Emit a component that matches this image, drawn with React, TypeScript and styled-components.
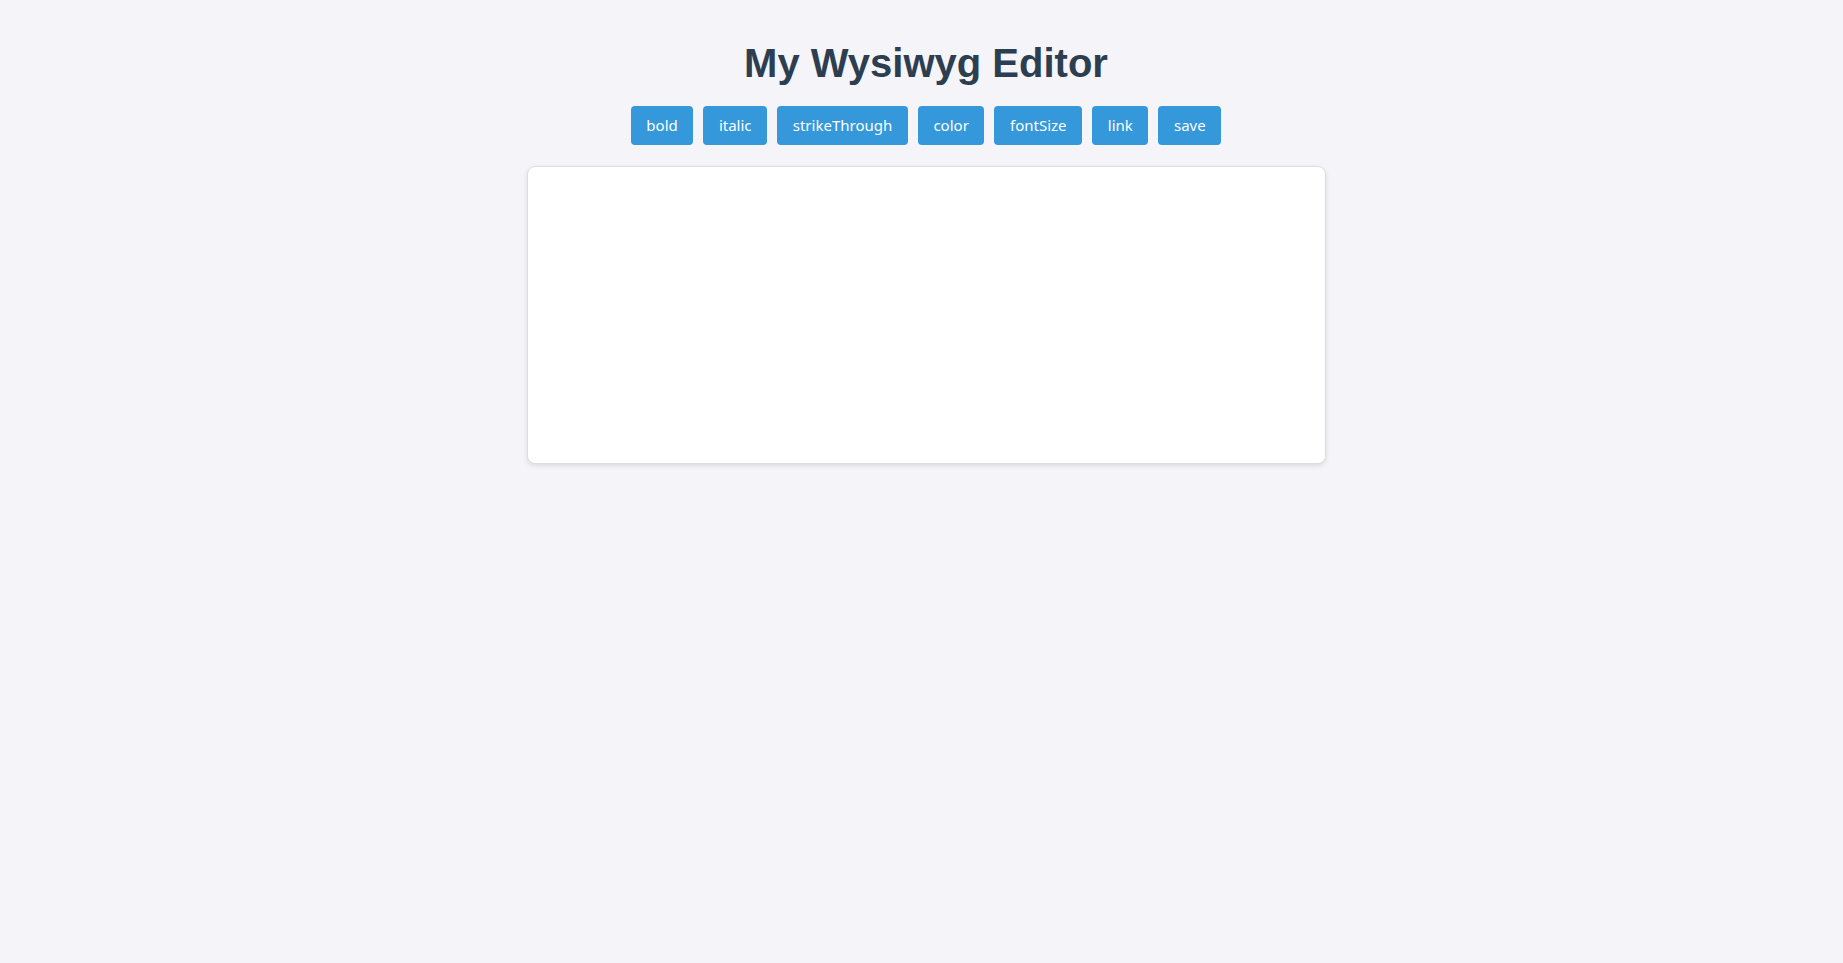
import React from "react";
import styled, { createGlobalStyle } from "styled-components";

const GlobalStyle = createGlobalStyle`
  html, body {
    margin: 0;
    padding: 0;
    background: #f4f4f9;
  }
  body {
    font-family: "Liberation Sans", Arial, sans-serif;
  }
`;

const Page = styled.div`
  display: flex;
  flex-direction: column;
  align-items: center;
  min-height: 963px;
  box-sizing: border-box;
  padding: 40px 0 0 9px;
`;

const Title = styled.h1`
  margin: 0 0 20px;
  font-family: "Liberation Sans", Arial, sans-serif;
  font-size: 40px;
  font-weight: 700;
  line-height: 46px;
  color: #2c3e50;
`;

const Toolbar = styled.div`
  display: flex;
  gap: 10px;
  margin-bottom: 21px;
`;

const ToolButton = styled.button`
  height: 39px;
  padding: 0 15.6px 1px;
  border: none;
  border-radius: 4px;
  background: #3498db;
  color: #ffffff;
  font-family: "Noto Sans", sans-serif;
  font-size: 15px;
  cursor: pointer;
`;

const Editor = styled.div`
  width: 799px;
  height: 298px;
  box-sizing: border-box;
  background: #ffffff;
  border: 1px solid #dddddd;
  border-radius: 8px;
  box-shadow: 0 2px 5px rgba(0, 0, 0, 0.1);
  padding: 10px;
  outline: none;
`;

const commands = ["bold", "italic", "strikeThrough", "color", "fontSize", "link", "save"];

export default function App() {
  return (
    <>
      <GlobalStyle />
      <Page>
        <Title>My Wysiwyg Editor</Title>
        <Toolbar>
          {commands.map((c) => (
            <ToolButton key={c}>{c}</ToolButton>
          ))}
        </Toolbar>
        <Editor contentEditable suppressContentEditableWarning />
      </Page>
    </>
  );
}
